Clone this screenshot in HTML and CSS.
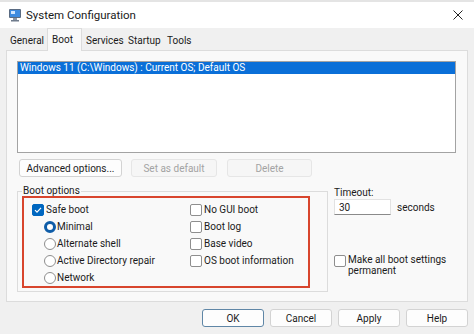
FILE: index.html
```html
<!DOCTYPE html>
<html lang="en">
<head>
  <meta charset="UTF-8">
  <title>System Configuration</title>
  <link rel="stylesheet" href="styles.css">
</head>
<body>
  <div class="window">
    <div class="titlebar">
      <svg class="app-icon" viewBox="0 0 14 14" width="14" height="14">
        <rect x="1" y="1" width="12" height="9" rx="1" fill="#5a6b82"/>
        <rect x="2" y="2" width="10" height="7" fill="#3d8be0"/>
        <rect x="3" y="3" width="4" height="3" fill="#cfe6ff"/>
        <rect x="5" y="10" width="4" height="2" fill="#8a96a6"/>
        <rect x="3" y="12" width="8" height="1.5" fill="#6f7b8c"/>
      </svg>
      <span class="title">System Configuration</span>
      <svg class="close" viewBox="0 0 10 10" width="10" height="10">
        <path d="M0.5 0.5 L9.5 9.5 M9.5 0.5 L0.5 9.5" stroke="#222" stroke-width="1" fill="none"/>
      </svg>
    </div>

    <div class="tabs">
      <span class="tab tab--general">General</span>
      <span class="tab tab--boot tab--active">Boot</span>
      <span class="tab tab--services">Services</span>
      <span class="tab tab--startup">Startup</span>
      <span class="tab tab--tools">Tools</span>
    </div>

    <div class="panel">
      <div class="listbox">
        <div class="listbox__item listbox__item--selected">Windows 11 (C:\Windows) : Current OS; Default OS</div>
      </div>

      <div class="button-row">
        <button class="btn btn--advanced">Advanced options...</button>
        <button class="btn btn--default" disabled>Set as default</button>
        <button class="btn btn--delete" disabled>Delete</button>
      </div>

      <div class="options">
        <fieldset class="groupbox">
          <legend>Boot options</legend>
          <div class="highlight">
            <div class="col col--left">
              <div class="row">
                <span class="box box--checked">
                  <svg viewBox="0 0 12 12" width="12" height="12"><path d="M3 6.2 L5 8.2 L9 3.8" stroke="#fff" stroke-width="1.2" fill="none"/></svg>
                </span>
                Safe boot
              </div>
              <div class="row row--indent"><span class="radio radio--on"></span>Minimal</div>
              <div class="row row--indent"><span class="radio"></span>Alternate shell</div>
              <div class="row row--indent"><span class="radio"></span>Active Directory repair</div>
              <div class="row row--indent"><span class="radio"></span>Network</div>
            </div>
            <div class="col col--right">
              <div class="row"><span class="box"></span>No GUI boot</div>
              <div class="row"><span class="box"></span>Boot log</div>
              <div class="row"><span class="box"></span>Base video</div>
              <div class="row"><span class="box"></span>OS boot information</div>
            </div>
          </div>
        </fieldset>

        <div class="side">
          <div class="timeout-label">Timeout:</div>
          <div class="timeout-row">
            <span class="textbox">30</span>
            <span class="timeout-unit">seconds</span>
          </div>
          <div class="permanent">
            <span class="box"></span>
            <span class="permanent__text">Make all boot settings<br>permanent</span>
          </div>
        </div>
      </div>
    </div>

    <div class="footer">
      <button class="btn btn--footer btn--primary">OK</button>
      <button class="btn btn--footer">Cancel</button>
      <button class="btn btn--footer">Apply</button>
      <button class="btn btn--footer">Help</button>
    </div>
  </div>
</body>
</html>
```

FILE: styles.css
```css
body {
  margin: 0;
  font-family: Roboto, "Noto Sans", sans-serif;
  font-size: 10px;
  color: #1b1b1b;
  background: #f0f0f0;
}

.window {
  width: 474px;
  height: 334px;
  display: flex;
  flex-direction: column;
  background: #f0f0f0;
  overflow: hidden;
  white-space: nowrap;
}

/* title bar */
.titlebar {
  height: 28px;
  flex-shrink: 0;
  display: flex;
  align-items: center;
  padding: 0 11px 0 8px;
  background: #fff;
  border-top: 2px solid #e4e4e4;
  box-sizing: border-box;
}

.app-icon {
  margin-right: 4px;
}

.title {
  flex: 1;
  font-size: 11.5px;
  color: #1a1a1a;
}

/* tabs */
.tabs {
  height: 22px;
  flex-shrink: 0;
  display: flex;
  align-items: flex-end;
  padding-left: 6px;
}

.tab {
  height: 20px;
  line-height: 22px;
  padding-left: 4px;
  box-sizing: border-box;
  color: #1b1b1b;
}

.tab--general { width: 41px; }
.tab--boot { width: 35px; }
.tab--services { width: 42px; }
.tab--startup { width: 39px; }
.tab--tools { width: 31px; }

.tab--active {
  height: 23px;
  line-height: 22px;
  background: #f9f9f9;
  border: 1px solid #dcdcdc;
  border-bottom: none;
  margin-bottom: -1px;
  position: relative;
  z-index: 1;
}

/* panel */
.panel {
  margin: 0 6px;
  height: 252px;
  box-sizing: border-box;
  border: 1px solid #dcdcdc;
  background: #f9f9f9;
  padding: 10px 0 0 10px;
}

.listbox {
  width: 439px;
  height: 92px;
  box-sizing: border-box;
  border: 1px solid #a3a3a3;
  background: #fff;
}

.listbox__item {
  height: 12px;
  line-height: 12px;
  padding-left: 2px;
}

.listbox__item--selected {
  background: #0a6fd8;
  color: #fff;
}

.button-row {
  display: flex;
  margin: 6px 0 0 2px;
}

.btn {
  height: 18px;
  padding: 0;
  font: inherit;
  color: #1b1b1b;
  background: #fdfdfd;
  border: 1px solid #d3d3d3;
  border-radius: 3px;
  white-space: nowrap;
}

.btn:disabled {
  background: #f6f6f6;
  border-color: #e6e6e6;
  color: #a3a3a3;
}

.btn--advanced { width: 103px; }
.btn--default { width: 86px; margin-left: 9px; }
.btn--delete { width: 85px; margin-left: 10px; }

/* boot options */
.options {
  display: flex;
  margin-top: 9px;
}

.groupbox {
  width: 311px;
  box-sizing: border-box;
  margin: 0;
  padding: 0 17px 3px 4px;
  border: 1px solid #dcdcdc;
}

.groupbox legend {
  padding: 0 1px;
  line-height: 10px;
}

.highlight {
  height: 92px;
  box-sizing: border-box;
  border: 2px solid #d8452d;
  display: flex;
  padding: 3px 0 0 8px;
}

.col--left {
  width: 158px;
}

.row {
  height: 17px;
  display: flex;
  align-items: center;
}

.row--indent {
  padding-left: 12px;
}

.box {
  width: 12px;
  height: 12px;
  flex-shrink: 0;
  box-sizing: border-box;
  border: 1px solid #8e8e8e;
  border-radius: 2px;
  background: #fff;
  margin-right: 2px;
  display: flex;
}

.box--checked {
  background: #0067c0;
  border-color: #0067c0;
}

.box--checked svg {
  margin: -1px;
}

.radio {
  width: 12px;
  height: 12px;
  flex-shrink: 0;
  box-sizing: border-box;
  border: 1px solid #8e8e8e;
  border-radius: 50%;
  background: #fff;
  margin-right: 1px;
}

.radio--on {
  border: 3.5px solid #0f5da8;
}

/* timeout side */
.side {
  margin-left: 6px;
}

.timeout-label {
  line-height: 13px;
}

.timeout-row {
  display: flex;
  align-items: center;
}

.textbox {
  width: 57px;
  height: 16px;
  line-height: 15px;
  box-sizing: border-box;
  padding-left: 4px;
  background: #fff;
  border: 1px solid #e2e2e2;
  border-bottom-color: #8a8a8a;
}

.timeout-unit {
  margin-left: 6px;
}

.permanent {
  display: flex;
  align-items: flex-start;
  margin-top: 40px;
}

.permanent__text {
  line-height: 11px;
  margin-top: -1px;
}

/* footer buttons */
.footer {
  display: flex;
  justify-content: flex-end;
  gap: 6px;
  padding: 7px 6px 0 0;
}

.btn--footer {
  width: 62px;
}

.btn--primary {
  border-color: #5f86a6;
}
```
